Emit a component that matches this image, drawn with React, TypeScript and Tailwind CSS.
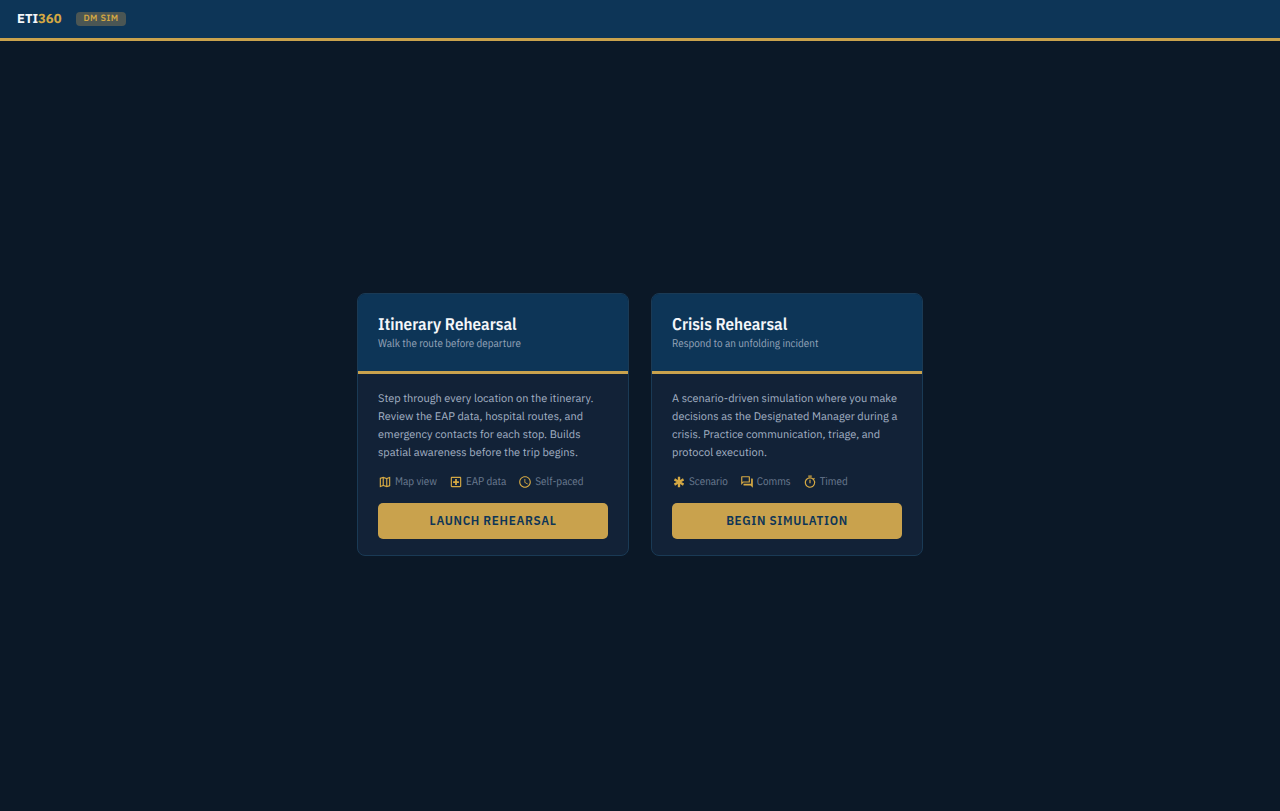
import type { IconType } from 'react-icons';
import {
  MdEmergency,
  MdOutlineForum,
  MdOutlineLocalHospital,
  MdOutlineMap,
  MdOutlineTimer,
  MdSchedule,
} from 'react-icons/md';

type Mode = {
  id: string;
  title: string;
  subtitle: string;
  description: string;
  features: { icon: IconType; label: string }[];
  action: string;
};

const MODES: Mode[] = [
  {
    id: 'itinerary',
    title: 'Itinerary Rehearsal',
    subtitle: 'Walk the route before departure',
    description:
      'Step through every location on the itinerary. Review the EAP data, hospital routes, and emergency contacts for each stop. Builds spatial awareness before the trip begins.',
    features: [
      { icon: MdOutlineMap, label: 'Map view' },
      { icon: MdOutlineLocalHospital, label: 'EAP data' },
      { icon: MdSchedule, label: 'Self-paced' },
    ],
    action: 'Launch Rehearsal',
  },
  {
    id: 'crisis',
    title: 'Crisis Rehearsal',
    subtitle: 'Respond to an unfolding incident',
    description:
      'A scenario-driven simulation where you make decisions as the Designated Manager during a crisis. Practice communication, triage, and protocol execution.',
    features: [
      { icon: MdEmergency, label: 'Scenario' },
      { icon: MdOutlineForum, label: 'Comms' },
      { icon: MdOutlineTimer, label: 'Timed' },
    ],
    action: 'Begin Simulation',
  },
];

function ModeCard({ mode }: { mode: Mode }) {
  return (
    <section className="flex flex-col overflow-hidden rounded-lg border border-[#1a3a55] bg-[#122237] font-['IBM_Plex_Sans_Condensed','Roboto_Condensed',sans-serif]">
      <div className="border-b-3 border-[#c9a24d] bg-[#0d3557] px-5 pt-5 pb-[19px]">
        <h2 className="text-[17px] leading-5 font-semibold text-[#f4f6f9]">{mode.title}</h2>
        <p className="mt-0.5 text-[11px] leading-4 text-[#94a3b8]">{mode.subtitle}</p>
      </div>
      <div className="flex flex-1 flex-col px-5 pt-4 pb-4">
        <p className="flex-1 font-['IBM_Plex_Sans','Roboto',sans-serif] text-[11px] leading-[18px] text-[#a3b1c4]">
          {mode.description}
        </p>
        <ul className="mt-3 flex flex-wrap gap-3">
          {mode.features.map(({ icon: Icon, label }) => (
            <li key={label} className="flex items-center gap-[3px] text-[11px] leading-4 text-[#6b7b90]">
              <Icon className="size-3.5 text-[#d4a843]" aria-hidden="true" />
              {label}
            </li>
          ))}
        </ul>
        <button
          type="button"
          className="mt-[13px] h-9 rounded-[5px] bg-[#c9a24d] text-[13px] font-semibold tracking-wider text-[#0d3557] uppercase"
        >
          {mode.action}
        </button>
      </div>
    </section>
  );
}

export default function App() {
  return (
    <div className="flex min-h-screen flex-col bg-[#0b1827] font-['IBM_Plex_Sans','Roboto',sans-serif] [text-rendering:geometricPrecision]">
      <header className="flex h-[41px] items-center gap-[15px] border-b-3 border-[#c9a24d] bg-[#0d3557] px-[17px]">
        <div className="text-[13px] font-bold text-[#f4f6f9]">
          ETI<span className="text-[#d4a843]">360</span>
        </div>
        <span className="rounded-sm bg-[#4b5654] px-[7px] text-[9px] leading-[14px] font-semibold tracking-wider text-[#d4a843]">
          DM SIM
        </span>
      </header>
      <main className="flex flex-1 items-center justify-center p-5 pb-[23px]">
        <div className="grid w-full max-w-[566px] gap-[22px] sm:grid-cols-2">
          {MODES.map((mode) => (
            <ModeCard key={mode.id} mode={mode} />
          ))}
        </div>
      </main>
    </div>
  );
}
